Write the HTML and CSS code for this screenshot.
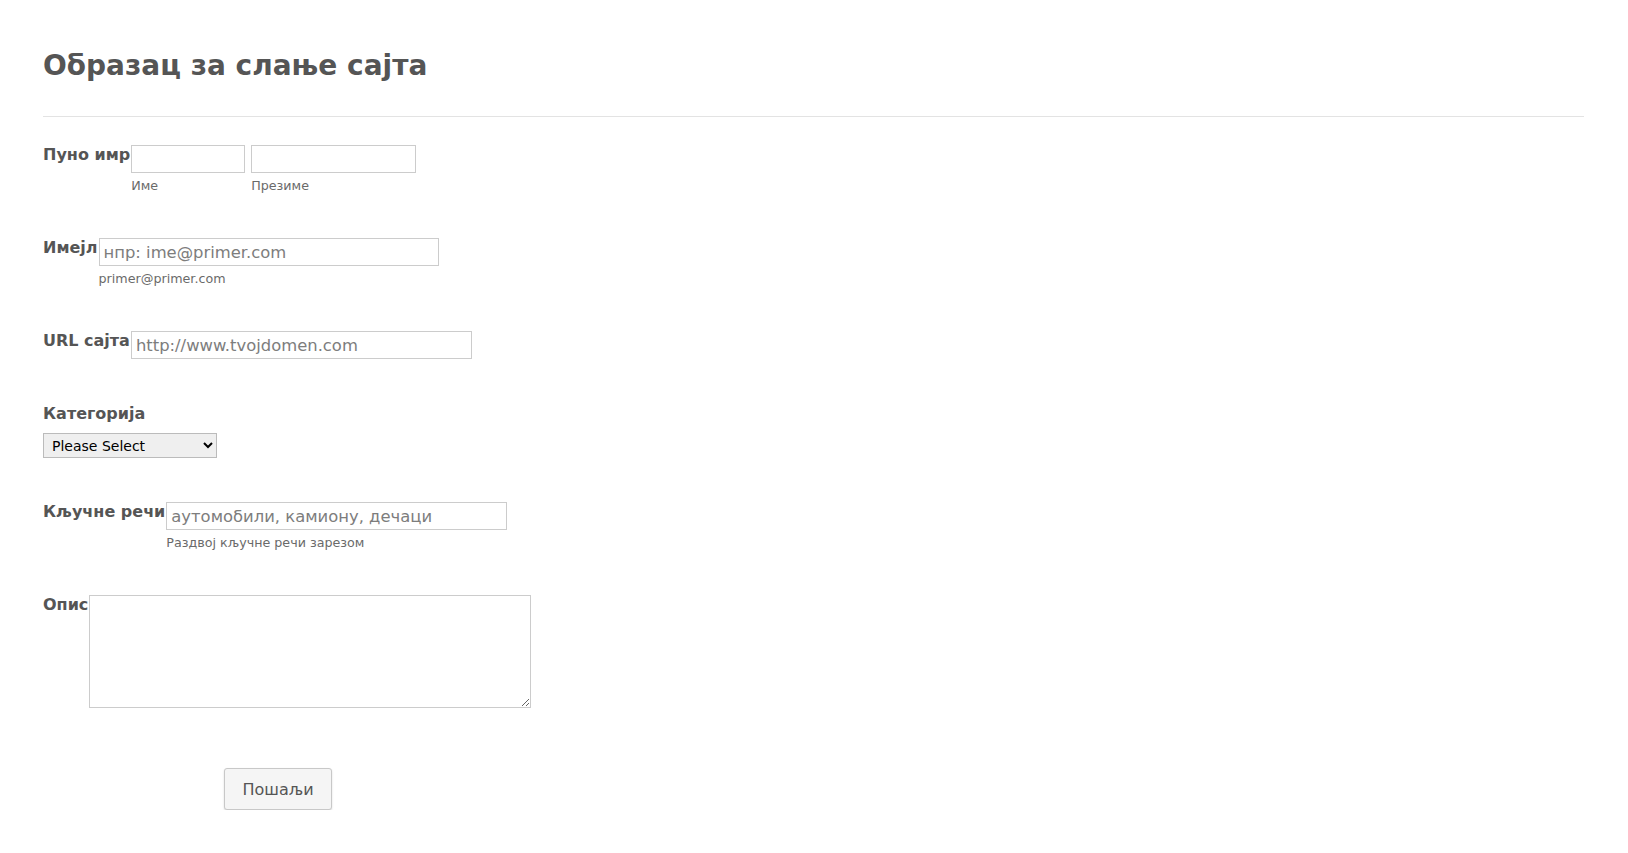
FILE: index.html
```html
<!DOCTYPE html>
<html lang="sr">
<head>
  <meta charset="UTF-8" />
  <meta name="viewport" content="width=device-width, initial-scale=1.0"/>
  <title>Образац за слање сајта</title>
  <link rel="stylesheet" href="styles.css">
</head>
<body>
  <form class="form-all" action="#">
    <div class="form-header">
      <h1>Образац за слање сајта</h1>
    </div>

    <ul class="form-section">
      <li class="form-line">
        <label class="form-label" for="first">Пуно имр</label>
        <div class="form-input name-group">
          <span class="sub-field">
            <input type="text" id="first" class="input-first" />
            <label class="sublabel" for="first">Име</label>
          </span>
          <span class="sub-field">
            <input type="text" id="last" class="input-last" />
            <label class="sublabel" for="last">Презиме</label>
          </span>
        </div>
      </li>

      <li class="form-line">
        <label class="form-label" for="email">Имејл</label>
        <div class="form-input">
          <input type="email" id="email" class="input-email" placeholder="нпр: ime@primer.com" />
          <label class="sublabel" for="email">primer@primer.com</label>
        </div>
      </li>

      <li class="form-line">
        <label class="form-label" for="url">URL сајта</label>
        <div class="form-input">
          <input type="text" id="url" class="input-wide" placeholder="http://www.tvojdomen.com" />
        </div>
      </li>

      <li class="form-line label-top">
        <label class="form-label" for="category">Категорија</label>
        <div class="form-input">
          <select id="category" class="dropdown">
            <option>Please Select</option>
            <option>Бизнис</option>
            <option>Блог</option>
            <option>Продавница</option>
          </select>
        </div>
      </li>

      <li class="form-line">
        <label class="form-label" for="keywords">Кључне речи</label>
        <div class="form-input">
          <input type="text" id="keywords" class="input-wide" placeholder="аутомобили, камиону, дечаци" />
          <label class="sublabel" for="keywords">Раздвој кључне речи зарезом</label>
        </div>
      </li>

      <li class="form-line">
        <label class="form-label" for="description">Опис</label>
        <div class="form-input">
          <textarea id="description" class="textarea"></textarea>
        </div>
      </li>

      <li class="form-buttons">
        <button type="submit" class="submit-button">Пошаљи</button>
      </li>
    </ul>
  </form>
</body>
</html>
```

FILE: styles.css
```css
body {
  margin: 0;
  padding: 0;
  background: #fff;
  color: #555;
  font-family: 'DejaVu Sans', Verdana, sans-serif;
}

.form-all {
  padding: 0 44px 0 43px;
}

.form-header {
  padding: 49px 0 34px;
  border-bottom: 1px solid #e3e3e3;
}

.form-header h1 {
  margin: 0;
  font-size: 28px;
  line-height: 33px;
  font-weight: bold;
  color: #555;
}

.form-section {
  list-style: none;
  margin: 0;
  padding: 28px 0 0;
  display: flex;
  flex-direction: column;
  gap: 45px;
}

.form-line {
  display: flex;
  align-items: flex-start;
  gap: 1px;
}

.form-line.label-top {
  flex-direction: column;
  gap: 10px;
  margin-bottom: -1px;
}

.form-label {
  font-size: 16px;
  line-height: 19px;
  font-weight: bold;
  color: #555;
  white-space: nowrap;
}

.form-input {
  display: flex;
  flex-direction: column;
}

.name-group {
  flex-direction: row;
  gap: 6px;
}

.sub-field {
  display: flex;
  flex-direction: column;
}

input, textarea, select, button {
  font-family: 'DejaVu Sans', Verdana, sans-serif;
}

input[type="text"], input[type="email"] {
  box-sizing: border-box;
  height: 28px;
  padding: 0 4px;
  border: 1px solid #ccc;
  border-radius: 0;
  font-size: 16.4px;
  color: #555;
  background: #fff;
  outline: none;
}

input::placeholder {
  color: #7d7d7d;
}

.input-first {
  width: 114px;
}

.input-last {
  width: 165px;
}

.input-email {
  width: 340px;
}

.input-wide {
  width: 341px;
}

.sublabel {
  margin-top: 5px;
  font-size: 12.7px;
  line-height: 15px;
  color: #6a6a6a;
}

.dropdown {
  box-sizing: border-box;
  width: 174px;
  height: 25px;
  padding: 0 4px;
  border: 1px solid #bbb;
  border-radius: 0;
  background-color: #efefef;
  font-size: 14px;
  color: #000;
}

.textarea {
  box-sizing: border-box;
  width: 442px;
  height: 113px;
  border: 1px solid #ccc;
  font-size: 14px;
  outline: none;
}

.form-buttons {
  padding: 15px 0 0 181px;
}

.submit-button {
  width: 108px;
  height: 42px;
  border: 1px solid #c8c8c8;
  border-radius: 3px;
  background: #f5f5f5;
  box-shadow: 0 1px 2px rgba(0, 0, 0, 0.15);
  color: #555;
  font-size: 16px;
  cursor: pointer;
}
```
